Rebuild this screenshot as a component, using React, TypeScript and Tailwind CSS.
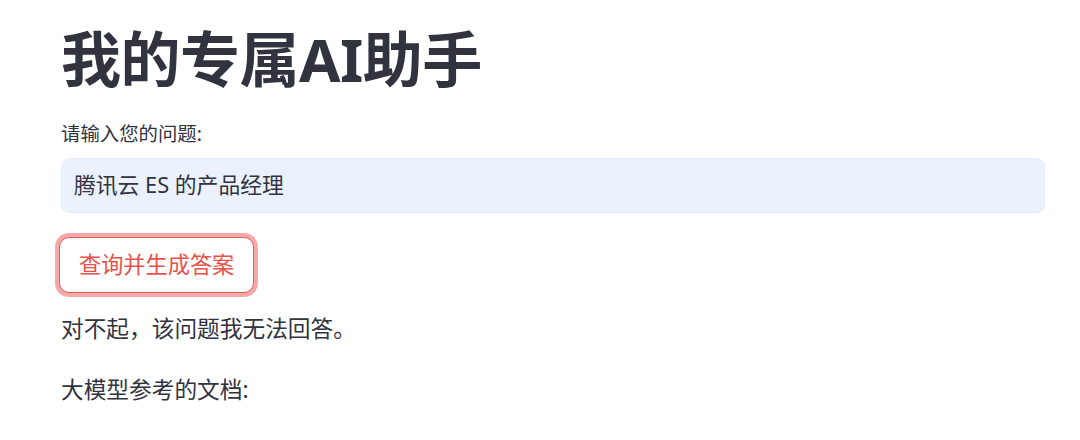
const FONT =
  "font-['Noto_Sans','Noto_Sans_CJK_SC','Liberation_Sans',sans-serif]";

export default function App() {
  return (
    <div className={`h-[440px] w-[1080px] bg-white text-[#31333f] ${FONT}`}>
      <div className="flex w-[1045px] flex-col pl-[61px] pt-[23px]">
        <h1 className="h-[72px] text-[60px] font-bold leading-[72px] tracking-[-0.5px]">
          我的专属AI助手
        </h1>

        <label className="mt-[26px] block text-[19.4px] leading-[26px]">
          请输入您的问题:
        </label>
        <div className="mt-[11px] flex h-[55px] items-center rounded-[9px] border border-[#e4ebf7] bg-[#ebf1fd] px-[12px] text-[21.8px]">
          腾讯云 ES 的产品经理
        </div>

        <div className="mt-[24px]">
          <button
            type="button"
            className="ml-[-2px] inline-flex h-[56px] items-center rounded-[10px] border-[1.5px] border-[#e35f57] bg-white px-[19px] text-[22.2px] text-[#e8524a] shadow-[0_0_0_4px_#f7a9a9]"
          >
            查询并生成答案
          </button>
        </div>

        <p className="mt-[19px] text-[22.7px] leading-[33px]">
          对不起，该问题我无法回答。
        </p>
        <p className="mt-[28px] text-[22.7px] leading-[33px]">
          大模型参考的文档:
        </p>
      </div>
    </div>
  );
}
